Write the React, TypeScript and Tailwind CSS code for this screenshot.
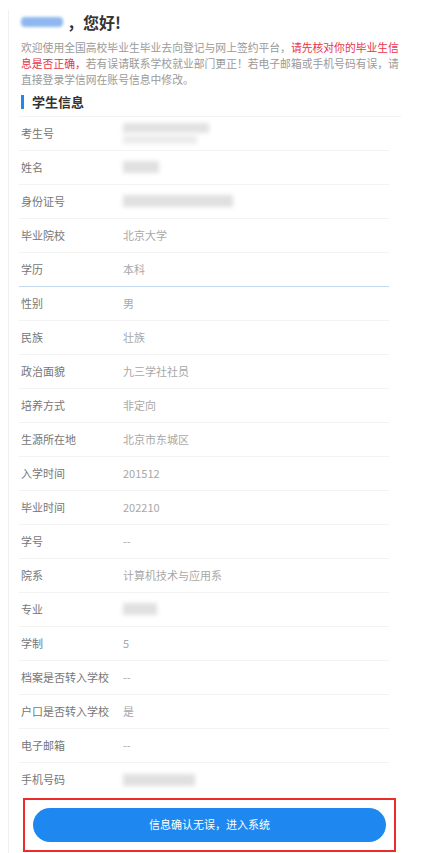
import React from "react";

const rows: { label: string; value?: string; blur?: string; blueLine?: boolean }[] = [
  { label: "考生号", blur: "two" },
  { label: "姓名", blur: "w-[36px]" },
  { label: "身份证号", blur: "w-[110px]" },
  { label: "毕业院校", value: "北京大学" },
  { label: "学历", value: "本科", blueLine: true },
  { label: "性别", value: "男" },
  { label: "民族", value: "壮族" },
  { label: "政治面貌", value: "九三学社社员" },
  { label: "培养方式", value: "非定向" },
  { label: "生源所在地", value: "北京市东城区" },
  { label: "入学时间", value: "201512" },
  { label: "毕业时间", value: "202210" },
  { label: "学号", value: "--" },
  { label: "院系", value: "计算机技术与应用系" },
  { label: "专业", blur: "w-[34px]" },
  { label: "学制", value: "5" },
  { label: "档案是否转入学校", value: "--" },
  { label: "户口是否转入学校", value: "是" },
  { label: "电子邮箱", value: "--" },
  { label: "手机号码", blur: "w-[72px]" },
];

export default function App() {
  return (
    <div
      className="w-[438px] h-[853px] bg-white overflow-hidden"
      style={{ fontFamily: '"Noto Sans CJK SC", "Noto Sans", sans-serif' }}
    >
      <div className="ml-[8px] w-[404px] h-full border-l border-[#f0f0f0] pl-[12px] pr-[12px]">
        {/* greeting */}
        <div className="flex items-center h-[24px] mt-[10px]">
          <span className="w-[42px] h-[10px] bg-[#8fb8f0] blur-[1.5px] rounded-sm" />
          <span className="ml-[4px] text-[16px] font-bold text-[#333]">，您好!</span>
        </div>

        <div className="mt-[5px] w-[380px] text-[10.8px] leading-[16px] text-[#9a9a9a]">
          <p>
            欢迎使用全国高校毕业生毕业去向登记与网上签约平台，
            <span className="text-[#e8344a]">请先核对你的毕业生信</span>
          </p>
          <p>
            <span className="text-[#e8344a]">息是否正确，</span>
            若有误请联系学校就业部门更正！若电子邮箱或手机号码有误，请
          </p>
          <p>直接登录学信网在账号信息中修改。</p>
        </div>

        {/* section heading */}
        <div className="mt-[5px] w-[382px] -ml-[2px] pl-[2px] border-b border-[#f2f2f2] pb-[4px] flex items-center">
          <span className="w-[3px] h-[14px] bg-[#1e88f0]" />
          <span className="ml-[8px] text-[13px] font-bold text-[#333]">学生信息</span>
        </div>

        {/* rows */}
        <div className="w-[370px] -ml-[2px]">
          {rows.map((r, i) => (
            <div
              key={r.label}
              className={
                "h-[34px] flex items-center pl-[2px] " +
                (i === rows.length - 1
                  ? ""
                  : r.blueLine
                  ? "border-b border-[#c3daee]"
                  : "border-b border-[#f3f3f3]")
              }
            >
              <span className="w-[102px] text-[11px] text-[#767676] whitespace-nowrap">{r.label}</span>
              {r.value && <span className="text-[11px] text-[#a8a8a8]">{r.value}</span>}
              {r.blur === "two" && (
                <span className="flex flex-col gap-[2px]">
                  <span className="w-[86px] h-[10px] bg-[#e2e2e2] blur-[2px]" />
                  <span className="w-[74px] h-[9px] bg-[#ececec] blur-[2px]" />
                </span>
              )}
              {r.blur && r.blur !== "two" && (
                <span className={r.blur + " h-[12px] bg-[#e0e0e0] blur-[2px]"} />
              )}
            </div>
          ))}
        </div>

        {/* confirm button */}
        <div className="mt-[1px] w-[373px] ml-[2px] h-[54px] border-2 border-[#ec2b2b] flex items-center px-[8px]">
          <button className="w-full h-[34px] rounded-full bg-[#1e88f0] text-white text-[11px]">
            信息确认无误，进入系统
          </button>
        </div>
      </div>
    </div>
  );
}
